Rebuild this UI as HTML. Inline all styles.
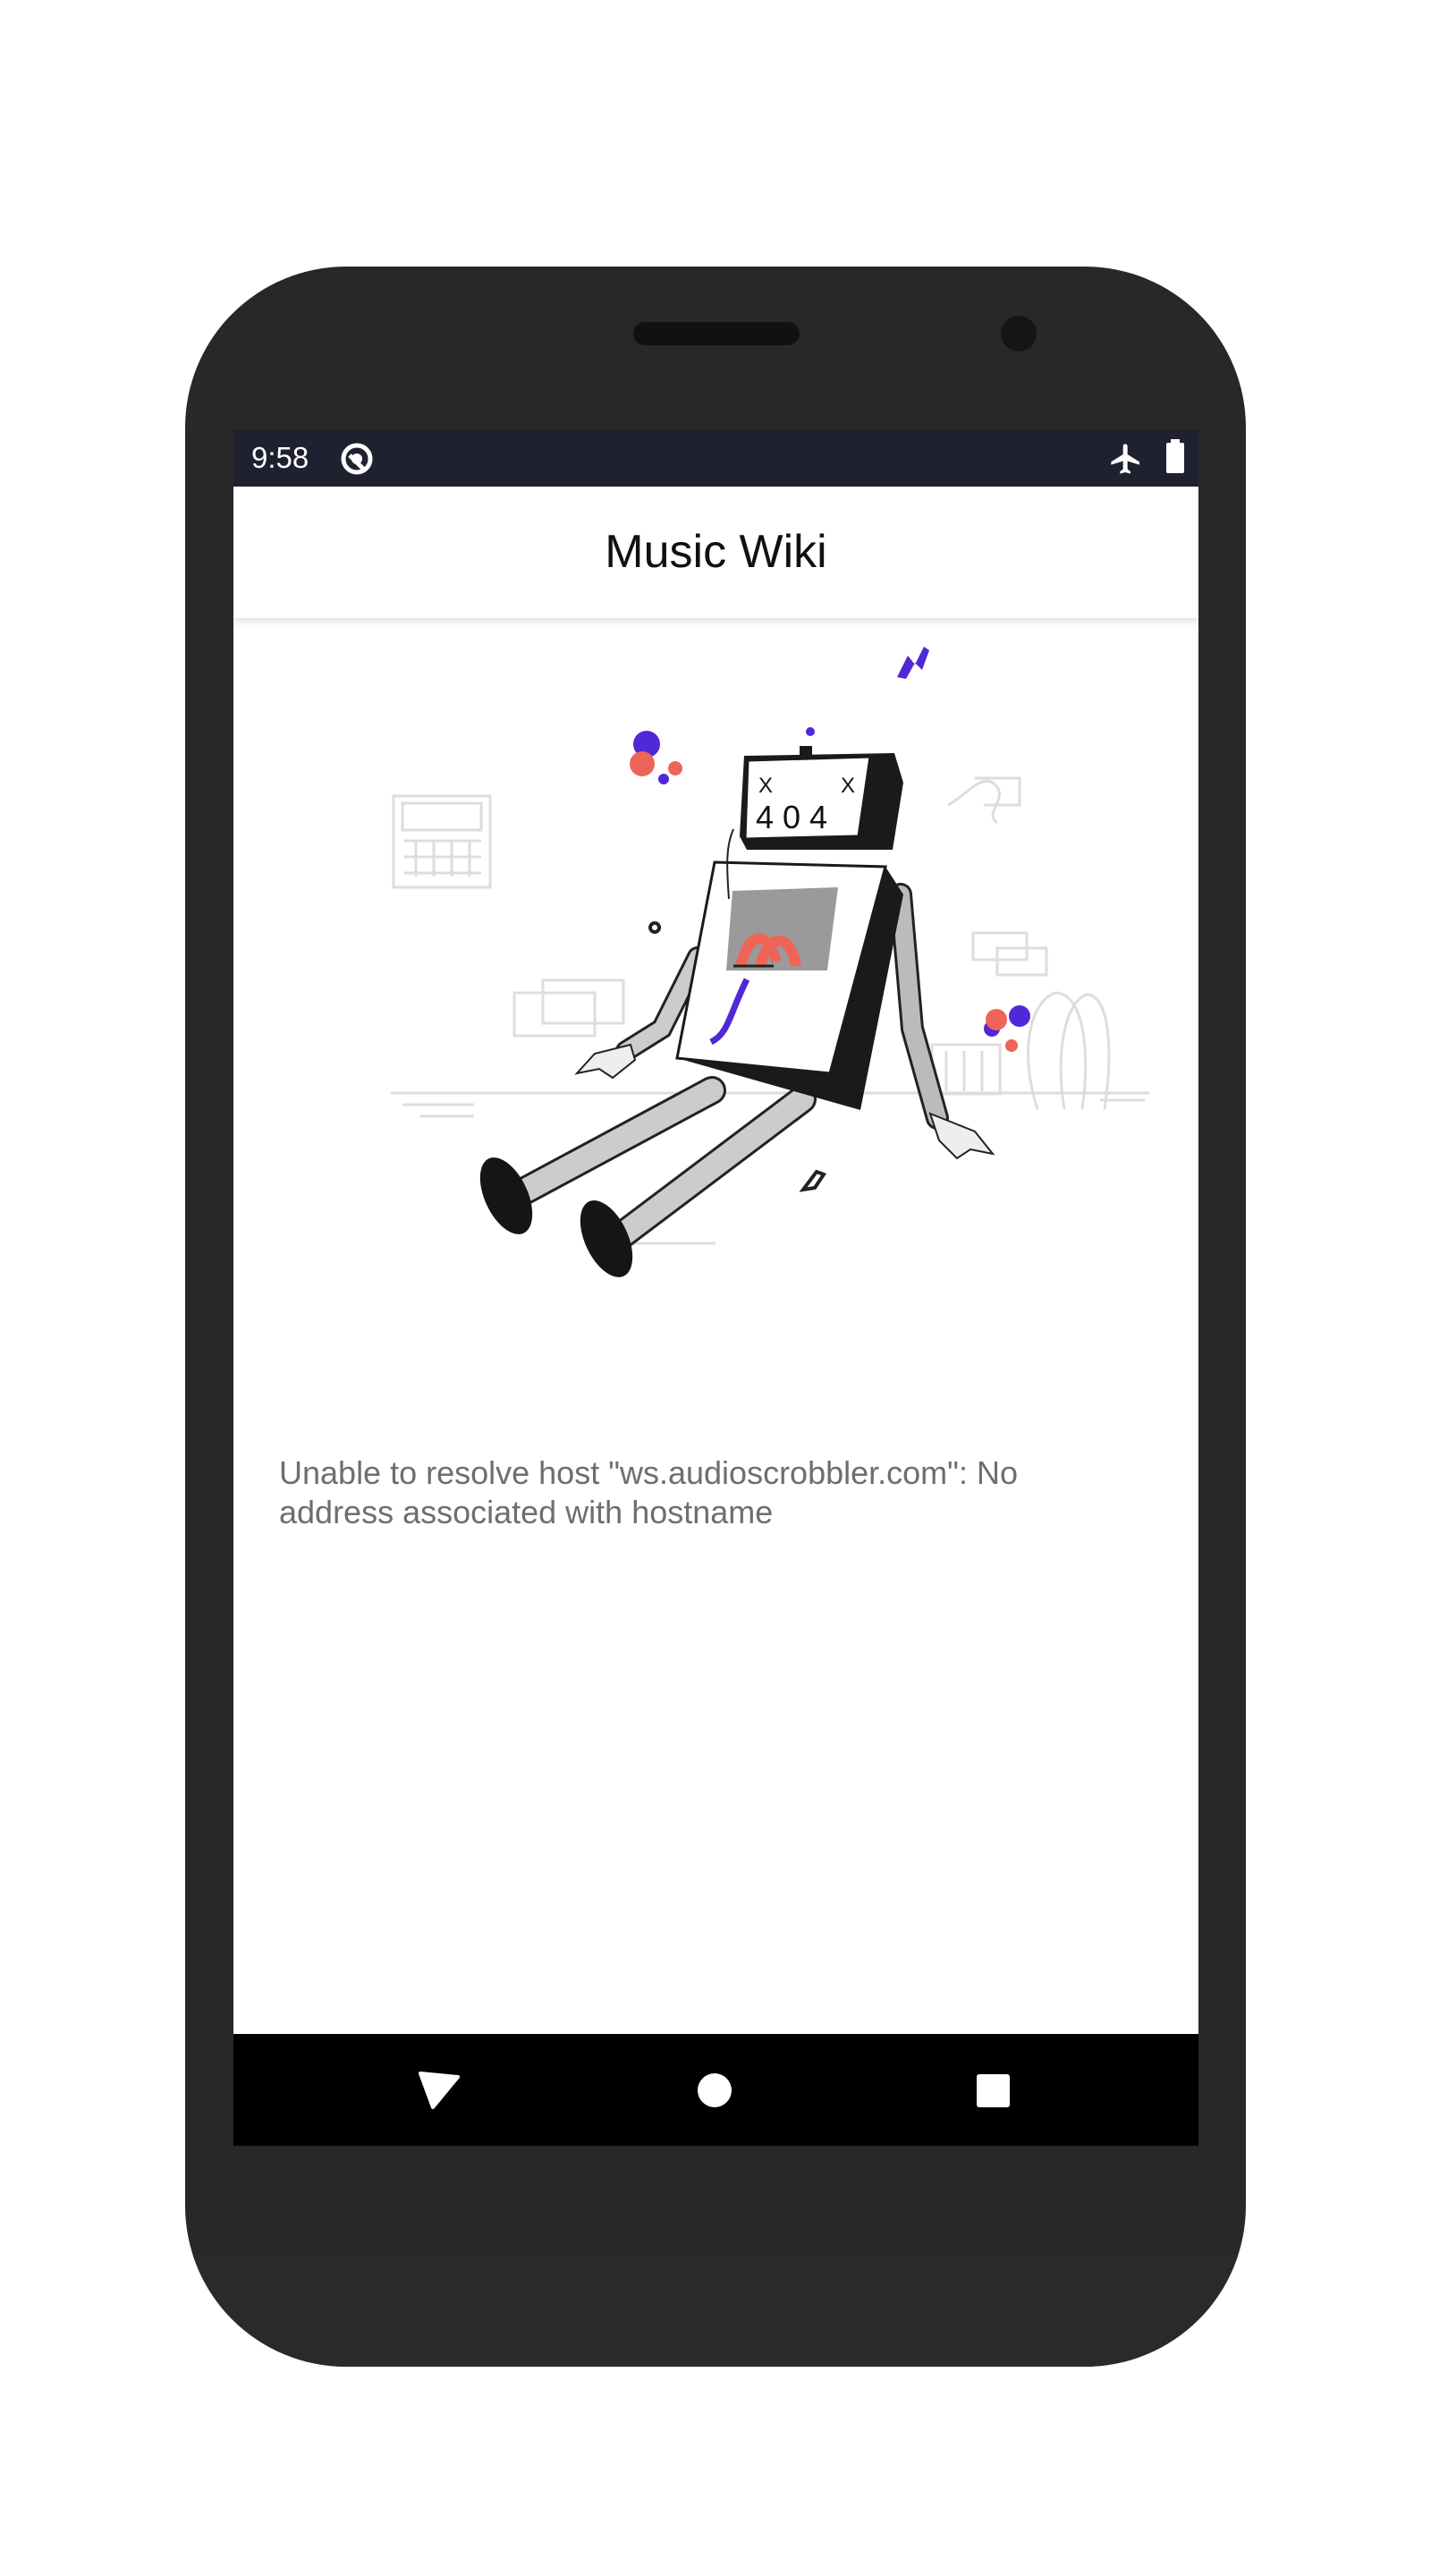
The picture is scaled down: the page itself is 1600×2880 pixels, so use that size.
<!DOCTYPE html>
<html><head><meta charset="utf-8"><style>
html,body{margin:0;padding:0;background:#fff;width:1600px;height:2880px;overflow:hidden;font-family:"Liberation Sans",sans-serif}
.abs{position:absolute}
</style></head><body>
<div class="abs" style="left:207px;top:298px;width:1186px;height:2348px;background:#282828;border-radius:180px;overflow:hidden">
  <div class="abs" style="left:0;top:2222px;width:1186px;height:126px;background:#2a2a2a"></div>
</div>
<div class="abs" style="left:708px;top:360px;width:186px;height:26px;background:#111;border-radius:13px"></div>
<div class="abs" style="left:1119px;top:353px;width:40px;height:40px;background:#151515;border-radius:50%"></div>
<div class="abs" style="left:261px;top:481px;width:1079px;height:1918px;background:#fff;overflow:hidden">
  <div class="abs" style="left:0;top:0;width:1079px;height:63px;background:#1f2130"></div>
  <div class="abs" style="left:20px;top:12px;color:#fff;font-size:33px">9:58</div>
  <svg class="abs" style="left:118px;top:12px" width="40" height="40" viewBox="0 0 40 40"><circle cx="20" cy="20" r="15" fill="none" stroke="#fff" stroke-width="5"/><path d="M12 16 L27 31" stroke="#fff" stroke-width="5"/><circle cx="20" cy="20" r="6" fill="#fff"/></svg>
  <svg class="abs" style="left:978px;top:10px" width="40" height="44" viewBox="0 0 24 24"><path fill="#fff" d="M21 16v-2l-8-5V3.5C13 2.7 12.3 2 11.5 2S10 2.7 10 3.5V9l-8 5v2l8-2.5V19l-2 1.5V22l3.5-1 3.5 1v-1.5L13 19v-5.5z"/></svg>
  <div class="abs" style="left:1043px;top:14px;width:20px;height:34px;background:#fff;border-radius:2px"></div>
  <div class="abs" style="left:1048px;top:10px;width:10px;height:6px;background:#fff"></div>
  <div class="abs" style="left:0;top:63px;width:1079px;height:147px;background:#fff;box-shadow:0 4px 8px rgba(0,0,0,0.12)"></div>
  <div class="abs" style="left:0;top:106px;width:1079px;text-align:center;font-size:52px;color:#111">Music Wiki</div>
  <svg class="abs" style="left:0;top:0" width="1079" height="1918" viewBox="261 481 1079 1918">
    <g stroke="#ddd" stroke-width="3" fill="none">
      <rect x="440" y="890" width="108" height="102"/><rect x="450" y="898" width="88" height="30"/>
      <path d="M452 940h86M452 958h86M452 976h86M465 940v40M485 940v40M505 940v40M525 940v40"/>
      <rect x="575" y="1110" width="90" height="48"/><rect x="607" y="1096" width="90" height="48"/>
      <rect x="1088" y="1043" width="60" height="30"/><rect x="1115" y="1060" width="55" height="30"/>
      <rect x="1042" y="1168" width="76" height="55"/><path d="M1058 1175v45M1078 1175v45M1098 1175v45"/>
      <path d="M1160 1240c-20-60-10-120 20-130 30 0 40 60 30 130M1190 1240c-10-60 0-120 25-128 25 0 30 60 20 128"/>
      <path d="M1060 900c20-10 40-40 55-20 10 15-15 30 0 40M1090 870h50v30h-40"/>
      <path d="M437 1222h848M450 1235h80M470 1248h60M1230 1230h50M680 1390h120"/>
    </g>
    <g fill="#5028d6"><circle cx="723" cy="832" r="15"/><circle cx="742" cy="871" r="6"/><circle cx="1140" cy="1136" r="12"/><circle cx="1109" cy="1150" r="9"/>
      <path d="M1003 757l12-24 8 10 10-20 6 4-8 22-8-8-10 18z"/></g>
    <g fill="#ef6459"><circle cx="718" cy="854" r="14"/><circle cx="755" cy="859" r="8"/><circle cx="1114" cy="1140" r="12"/><circle cx="1131" cy="1169" r="7"/></g>
    <path d="M1007 1000 L1020 1150 L1048 1250" stroke="#222" stroke-width="26" fill="none" stroke-linecap="round"/>
    <path d="M1007 1000 L1020 1150 L1048 1250" stroke="#bbb" stroke-width="20" fill="none" stroke-linecap="round"/>
    <path d="M1040 1245 l50 20 20 25 -25 -5 -15 10 -20 -20z" fill="#eee" stroke="#222" stroke-width="2"/>
    <path d="M780 1070 L740 1150 L700 1175" stroke="#222" stroke-width="24" fill="none" stroke-linecap="round"/>
    <path d="M780 1070 L740 1150 L700 1175" stroke="#ccc" stroke-width="18" fill="none" stroke-linecap="round"/>
    <path d="M705 1168 l-40 10 -20 22 25 -5 15 10 25 -20z" fill="#eee" stroke="#222" stroke-width="2"/>
    <path d="M796 1219 L580 1335" stroke="#222" stroke-width="32" stroke-linecap="round"/>
    <path d="M796 1219 L580 1335" stroke="#ccc" stroke-width="26" stroke-linecap="round"/>
    <path d="M897 1229 L690 1385" stroke="#222" stroke-width="32" stroke-linecap="round"/>
    <path d="M897 1229 L690 1385" stroke="#ccc" stroke-width="26" stroke-linecap="round"/>
    <ellipse cx="566" cy="1337" rx="24" ry="46" transform="rotate(-25 566 1337)" fill="#151515"/>
    <ellipse cx="678" cy="1385" rx="24" ry="46" transform="rotate(-25 678 1385)" fill="#151515"/>
    <polygon points="990,969 1010,1000 962,1241 757,1183 799,964" fill="#1a1a1a"/>
    <polygon points="799,964 990,969 928,1200 757,1183" fill="#fff" stroke="#1a1a1a" stroke-width="3"/>
    <polygon points="819,996 937,992 925,1085 812,1085" fill="#9a9a9a"/>
    <path d="M828 1080c10-40 30-40 40-5M850 1080c10-40 35-35 40 0" stroke="#ef6459" stroke-width="12" fill="none"/>
    <path d="M795 1165c20-10 20-30 40-70" stroke="#5028d6" stroke-width="7" fill="none"/>
    <path d="M820 1080h45" stroke="#222" stroke-width="3"/>
    <polygon points="832,845 1000,842 1010,875 998,950 835,950 827,935" fill="#1a1a1a"/>
    <polygon points="836,850 973,846 960,935 833,938" fill="#fff" stroke="#1a1a1a" stroke-width="3"/>
    <rect x="894" y="834" width="14" height="10" fill="#1a1a1a"/>
    <text x="845" y="926" font-size="36" font-family="Liberation Sans" fill="#111" letter-spacing="10">404</text>
    <text x="848" y="886" font-size="24" font-family="Liberation Sans" fill="#111">X</text>
    <text x="940" y="886" font-size="24" font-family="Liberation Sans" fill="#111">X</text>
    <circle cx="906" cy="818" r="5" fill="#5028d6"/>
    <path d="M898 1330l15-20 8 3-10 15zM732 1032a5 5 0 1 0 .1 0" stroke="#222" stroke-width="4" fill="none"/>
    <path d="M815 1005c-3-40-3-60 5-78" stroke="#222" stroke-width="2" fill="none"/>
  </svg>
  <div class="abs" style="left:51px;top:1144px;width:960px;font-size:36px;line-height:44px;color:#6e6e6e">Unable to resolve host "ws.audioscrobbler.com": No address associated with hostname</div>
  <div class="abs" style="left:0;top:1793px;width:1079px;height:125px;background:#000"></div>
  <svg class="abs" style="left:205px;top:1833px" width="50" height="46" viewBox="0 0 50 46"><path d="M4 4 L46 8 L18 42 Z" fill="#fff" stroke="#fff" stroke-width="4" stroke-linejoin="round"/></svg>
  <div class="abs" style="left:519px;top:1837px;width:38px;height:38px;border-radius:50%;background:#fff"></div>
  <div class="abs" style="left:831px;top:1838px;width:37px;height:37px;border-radius:3px;background:#fff"></div>
</div>
</body></html>
